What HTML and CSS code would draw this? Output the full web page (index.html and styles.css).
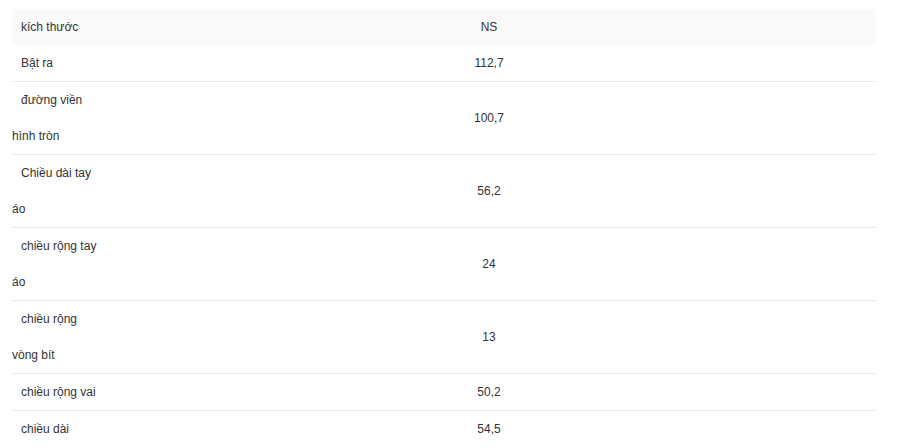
FILE: index.html
```html
<!DOCTYPE html>
<html lang="vi">
<head>
<meta charset="utf-8">
<link rel="stylesheet" href="styles.css">
</head>
<body>
<div class="wrap">
<table class="size-table">
  <thead>
    <tr><th class="label">kích thước</th><th class="val">NS</th></tr>
  </thead>
  <tbody>
    <tr><td class="label">Bật ra</td><td class="val">112,7</td></tr>
    <tr><td class="label">đường viền hình tròn</td><td class="val">100,7</td></tr>
    <tr><td class="label">Chiều dài tay áo</td><td class="val">56,2</td></tr>
    <tr><td class="label">chiều rộng tay áo</td><td class="val">24</td></tr>
    <tr><td class="label">chiều rộng vòng bít</td><td class="val">13</td></tr>
    <tr><td class="label">chiều rộng vai</td><td class="val">50,2</td></tr>
    <tr><td class="label">chiều dài</td><td class="val">54,5</td></tr>
  </tbody>
</table>
</div>
</body>
</html>
```
FILE: styles.css
```css
html, body {
  margin: 0;
  padding: 0;
  background: #ffffff;
}
.wrap {
  padding: 9px 0 0 12px;
}
.size-table {
  width: 864px;
  border-collapse: collapse;
  border-spacing: 0;
  table-layout: fixed;
  font-family: "Liberation Sans", Arial, sans-serif;
  font-size: 12px;
  color: #333333;
}
.size-table th,
.size-table td {
  padding: 0;
  line-height: 36px;
  font-weight: normal;
  vertical-align: middle;
}
.size-table thead tr {
  background: #fafafa;
}
.size-table tbody tr {
  border-top: 1px solid #e8e8e8;
}
.size-table tbody tr:first-child {
  border-top: none;
}
.label {
  width: 90px;
  text-align: left;
  text-indent: 9px;
}
.val {
  text-align: center;
}
```
